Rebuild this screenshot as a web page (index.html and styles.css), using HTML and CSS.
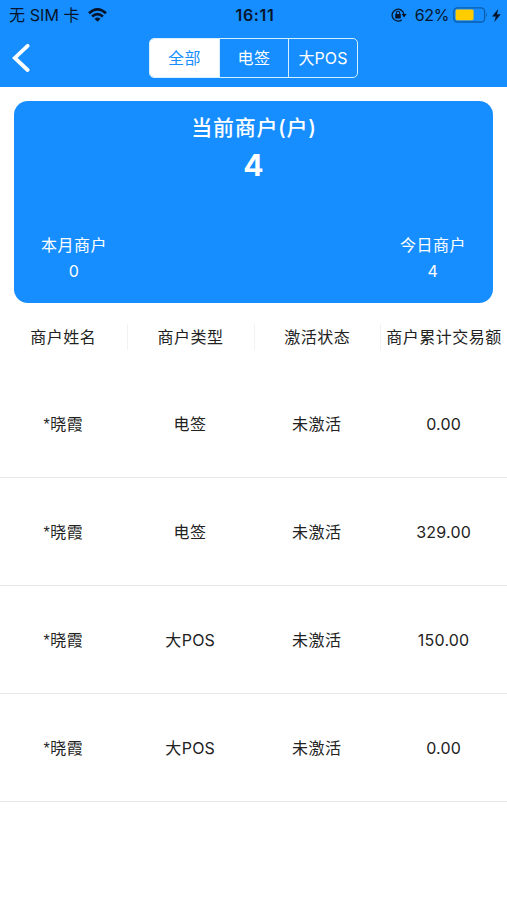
FILE: index.html
```
<!DOCTYPE html>
<html lang="zh-CN">
<head>
    <meta charset="UTF-8">
    <meta name="viewport" content="width=device-width, initial-scale=1.0">
    <title>商户</title>
    <link rel="stylesheet" href="styles.css">
</head>
<body>
    <header class="header">
        <div class="status">
            <div class="status-left">
                <span class="carrier">无 SIM 卡</span>
                <svg class="wifi" width="19" height="14" viewBox="0 0 19 14">
                    <g fill="none" stroke="#06152b" stroke-width="2.7">
                        <path d="M1 5.2Q9.5 -2.4 18 5.2"/>
                        <path d="M4.1 8.5Q9.5 3.8 14.9 8.5"/>
                    </g>
                    <path d="M6.5 10.7Q9.5 8.3 12.5 10.7L9.5 13.7Z" fill="#06152b"/>
                </svg>
            </div>
            <span class="time">16:11</span>
            <div class="status-right">
                <svg class="lock" width="16" height="14" viewBox="0 0 16 14">
                    <path d="M10.8 11.7A5.9 5.9 0 1 1 12.9 6.3" fill="none" stroke="#06152b" stroke-width="1.3"/>
                    <path d="M10.6 6h5l-2.5 3.4z" fill="#06152b"/>
                    <rect x="4.2" y="6" width="5.6" height="4.4" rx=".6" fill="#06152b"/>
                    <path d="M5.3 6.5V5a1.7 1.7 0 0 1 3.4 0v1.5" fill="none" stroke="#06152b" stroke-width="1.1"/>
                </svg>
                <span class="percent">62%</span>
                <svg class="battery" width="36" height="16" viewBox="0 0 36 16">
                    <rect x=".8" y=".8" width="30.8" height="14.2" rx="3.6" fill="none" stroke="#0c5cac" stroke-width="1.3"/>
                    <rect x="2.6" y="2.6" width="18" height="10.6" rx="1.4" fill="#ffcc00"/>
                    <path d="M33.2 5.5q1.8 2.4 0 4.8z" fill="#0c5cac"/>
                </svg>
                <svg class="bolt" width="9" height="13" viewBox="0 0 9 13">
                    <path d="M6.2 0L0 7.4h3.7L2.3 13L8.8 5.3H5z" fill="#06152b"/>
                </svg>
            </div>
        </div>
        <div class="nav">
            <svg class="back" width="20" height="30" viewBox="0 0 20 30">
                <path d="M17.6 2.8L4.8 14.9L17.6 27" fill="none" stroke="#fff" stroke-width="3.8" stroke-linecap="round"/>
            </svg>
            <div class="tabs">
                <div class="tab active">全部</div>
                <div class="tab">电签</div>
                <div class="tab pos">大POS</div>
            </div>
        </div>
    </header>

    <div class="card">
        <div class="card-title">当前商户(户)</div>
        <div class="card-total">4</div>
        <div class="card-bottom">
            <div class="item">
                <div>本月商户</div>
                <div>0</div>
            </div>
            <div class="item">
                <div>今日商户</div>
                <div>4</div>
            </div>
        </div>
    </div>

    <div class="row head">
        <div>商户姓名</div>
        <div>商户类型</div>
        <div>激活状态</div>
        <div>商户累计交易额</div>
    </div>
    <div class="list">
        <div class="row">
            <div><span class="star">*</span>晓霞</div>
            <div>电签</div>
            <div>未激活</div>
            <div class="money">0.00</div>
        </div>
        <div class="row">
            <div><span class="star">*</span>晓霞</div>
            <div>电签</div>
            <div>未激活</div>
            <div class="money">329.00</div>
        </div>
        <div class="row">
            <div><span class="star">*</span>晓霞</div>
            <div>大<span class="latin">POS</span></div>
            <div>未激活</div>
            <div class="money">150.00</div>
        </div>
        <div class="row">
            <div><span class="star">*</span>晓霞</div>
            <div>大<span class="latin">POS</span></div>
            <div>未激活</div>
            <div class="money">0.00</div>
        </div>
    </div>
</body>
</html>
```
FILE: styles.css
```
* {
    box-sizing: border-box;
}
body {
    margin: 0;
    font-family: Inter, "Noto Sans CJK SC", sans-serif;
    font-size: 16px;
    color: #222;
    background-color: #fff;
}
.header {
    height: 87px;
    background-color: #168eff;
}
.status {
    display: grid;
    grid-template-columns: 1fr auto 1fr;
    align-items: center;
    height: 30px;
    padding: 0 6px 0 9px;
    color: #06152b;
}
.status-left, .status-right {
    display: flex;
    align-items: center;
}
.status-right {
    justify-content: flex-end;
}
.carrier {
    padding-bottom: 2px;
    letter-spacing: 0.1px;
}
.wifi {
    margin-left: 8px;
}
.time {
    font-weight: 600;
    letter-spacing: 0.7px;
}
.percent {
    margin: 0 4px 0 8px;
    letter-spacing: -0.4px;
}
.bolt {
    margin-left: 3px;
}
.nav {
    display: grid;
    grid-template-columns: 1fr auto 1fr;
    align-items: center;
    height: 56px;
    padding-left: 10px;
    padding-right: 10px;
}
.tabs {
    display: grid;
    grid-template-columns: repeat(3, 1fr);
    width: 209px;
    height: 40px;
    border: 1.5px solid #d6f0ff;
    border-radius: 5px;
    overflow: hidden;
}
.tab {
    display: flex;
    align-items: center;
    justify-content: center;
    padding-bottom: 2px;
    color: #fff;
    letter-spacing: 0.5px;
}
.tab + .tab {
    border-left: 1px solid #d6f0ff;
}
.tab.active {
    color: #168eff;
    background-color: #fff;
}
.tab.pos {
    letter-spacing: 0.1px;
}
.card {
    display: flex;
    flex-direction: column;
    align-items: center;
    height: 202px;
    margin: 14px 14px 0;
    padding-top: 12px;
    border-radius: 14px;
    color: #fff;
    background-color: #168eff;
}
.card-title {
    padding-left: 1px;
    font-size: 21px;
    font-weight: 500;
    line-height: 30px;
    letter-spacing: 0.7px;
}
.card-total {
    font-size: 30px;
    font-weight: 700;
    line-height: 44px;
}
.card-bottom {
    display: flex;
    justify-content: space-between;
    width: 100%;
    margin-top: 45px;
    padding: 0 27px;
}
.item {
    text-align: center;
    line-height: 26px;
    letter-spacing: 0.5px;
}
.row {
    display: grid;
    grid-template-columns: repeat(4, 1fr);
    align-items: center;
    height: 108px;
    border-bottom: 1px solid #e8e8e8;
    text-align: center;
    white-space: nowrap;
    letter-spacing: 0.5px;
}
.row div {
    padding-bottom: 2px;
}
.star {
    font-family: "Liberation Sans", sans-serif;
}
.latin {
    letter-spacing: 0.2px;
}
.head {
    height: 67px;
    border-bottom: 0;
}
.row.head div {
    padding-bottom: 0;
    line-height: 26px;
}
.head div + div {
    border-left: 1px solid #f2f2f2;
}
.row .money {
    padding-bottom: 0;
    letter-spacing: 0.2px;
}
```
